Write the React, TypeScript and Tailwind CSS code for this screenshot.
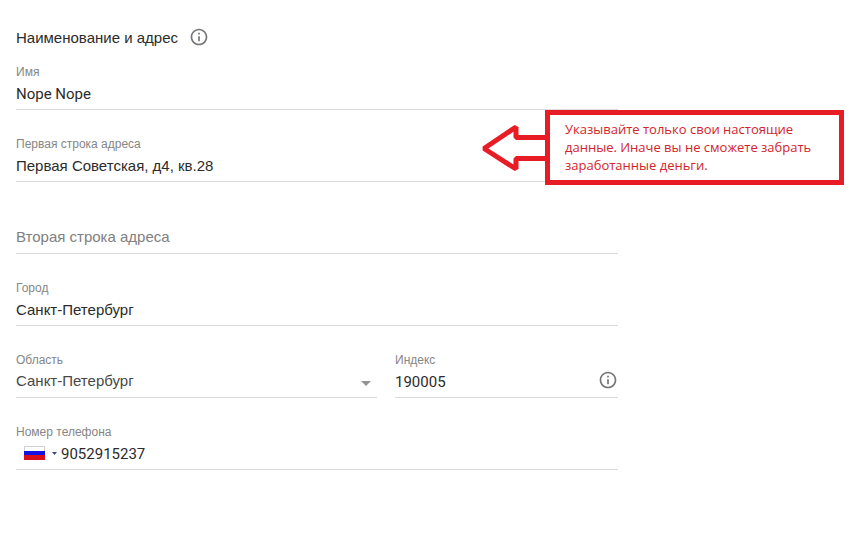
import React from "react";

const inputClass =
  "block h-7 w-full min-w-0 appearance-none bg-transparent text-[15px] leading-5 text-[#2b2b2b] outline-none placeholder:text-[#808080]";
const cyrillicInput = inputClass + " pb-0.5";
const latinInput = inputClass + " font-[Roboto,sans-serif]";

function Field({ id, label, children }: { id: string; label: string; children: React.ReactNode }) {
  return (
    <div className="border-b border-[#dcdcdc] pb-px">
      <label htmlFor={id} className="block h-4 text-xs leading-4 text-[#868686]">
        {label}
      </label>
      {children}
    </div>
  );
}

function InfoButton({ label }: { label: string }) {
  return (
    <button type="button" aria-label={label} className="shrink-0 text-[#757575]">
      <svg viewBox="0 0 24 24" fill="currentColor" className="block size-5">
        <path d="M11 17h2v-6h-2v6zm1-15C6.48 2 2 6.48 2 12s4.48 10 10 10 10-4.48 10-10S17.52 2 12 2zm0 18c-4.41 0-8-3.59-8-8s3.59-8 8-8 8 3.59 8 8-3.59 8-8 8zM11 9h2V7h-2v2z" />
      </svg>
    </button>
  );
}

function Callout() {
  return (
    <aside className="absolute top-[110px] left-[481px] flex items-start">
      <svg viewBox="0 0 64 75" className="h-[75px] w-16 shrink-0" aria-hidden="true">
        <path
          d="M66 27.500H35V17L3 38.500L35 59V48.500H66"
          fill="#fff"
          stroke="#e81c24"
          strokeWidth="5"
          strokeLinejoin="bevel"
        />
      </svg>
      <p className="relative h-[75px] w-[299px] border-5 border-[#e81c24] bg-white py-[5px] pr-2 pl-[15px] font-['Open_Sans',sans-serif] text-[13px] leading-[18px] text-[#d3242b]">
        Указывайте только свои настоящие
        <br />
        данные. Иначе вы не сможете забрать
        <br />
        заработанные деньги.
      </p>
    </aside>
  );
}

export default function App() {
  return (
    <main className="relative min-h-screen bg-white px-4 pt-[27px] font-['Liberation_Sans',sans-serif]">
      <form className="flex max-w-[602px] flex-col gap-[26px]">
        <div>
          <div className="mb-[17px] flex h-5 items-center gap-[11px]">
            <h1 className="pt-0.5 text-[15px] leading-5 text-[#2b2b2b]">Наименование и адрес</h1>
            <InfoButton label="О наименовании и адресе" />
          </div>
          <Field id="name" label="Имя">
            <input id="name" defaultValue="Nope Nope" className={latinInput} />
          </Field>
        </div>
        <Field id="address1" label="Первая строка адреса">
          <input id="address1" defaultValue="Первая Советская, д4, кв.28" className={cyrillicInput} />
        </Field>
        <div className="border-b border-[#dcdcdc] pt-[15px] pb-0.5">
          <input
            id="address2"
            aria-label="Вторая строка адреса"
            placeholder="Вторая строка адреса"
            className={cyrillicInput}
          />
        </div>
        <Field id="city" label="Город">
          <input id="city" defaultValue="Санкт-Петербург" className={cyrillicInput} />
        </Field>
        <div className="flex gap-[18px]">
          <div className="min-w-0 flex-1">
            <Field id="region" label="Область">
              <div className="relative">
                <select
                  id="region"
                  className="block h-7 w-full appearance-none bg-transparent p-0 pb-0.5 text-[15px] leading-5 text-[#484848] outline-none"
                >
                  <option>Санкт-Петербург</option>
                </select>
                <svg
                  viewBox="0 0 10 5"
                  className="pointer-events-none absolute top-[13px] right-1.5 h-[5px] w-2.5 fill-[#949494]"
                  aria-hidden="true"
                >
                  <path d="M0 0h10L5 5z" />
                </svg>
              </div>
            </Field>
          </div>
          <div className="w-[223px]">
            <Field id="zip" label="Индекс">
              <div className="flex h-7 items-center">
                <input id="zip" defaultValue="190005" className={latinInput} />
                <div className="flex pb-1">
                  <InfoButton label="Об индексе" />
                </div>
              </div>
            </Field>
          </div>
        </div>
        <Field id="phone" label="Номер телефона">
          <div className="flex items-center">
            <button
              type="button"
              aria-label="Код страны: Россия"
              className="ml-2 flex shrink-0 items-center gap-[7px] pb-0.5"
            >
              <svg viewBox="0 0 21 14" className="block h-3.5 w-[21px]" aria-hidden="true">
                <path fill="#fff" d="M0 0h21v5H0z" />
                <path fill="#1512e0" d="M0 5h21v4H0z" />
                <path fill="#d9101c" d="M0 9h21v5H0z" />
                <path fill="none" stroke="#cfcfcf" d="M.5 5V.5h20V5" />
              </svg>
              <svg viewBox="0 0 5 3" className="block h-[3px] w-[5px] fill-[#334a78]" aria-hidden="true">
                <path d="M0 0h5L2.500 3z" />
              </svg>
            </button>
            <input id="phone" type="tel" defaultValue="9052915237" className={latinInput + " ml-1"} />
          </div>
        </Field>
      </form>
      <Callout />
    </main>
  );
}
